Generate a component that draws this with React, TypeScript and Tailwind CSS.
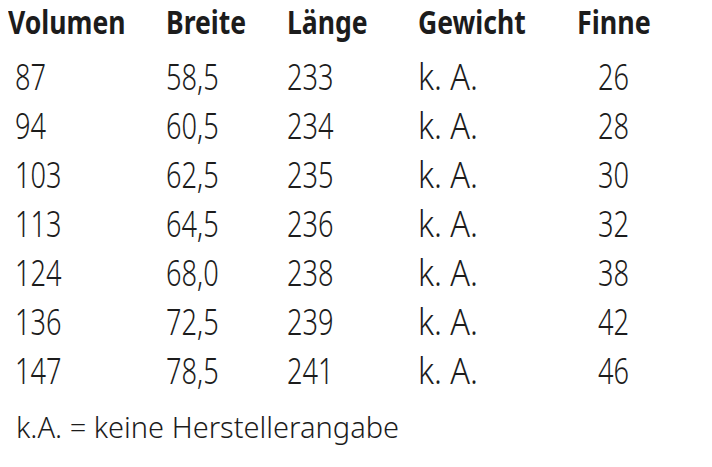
import React from "react";

const rows = [
  ["87", "58,5", "233", "k. A.", "26"],
  ["94", "60,5", "234", "k. A.", "28"],
  ["103", "62,5", "235", "k. A.", "30"],
  ["113", "64,5", "236", "k. A.", "32"],
  ["124", "68,0", "238", "k. A.", "38"],
  ["136", "72,5", "239", "k. A.", "42"],
  ["147", "78,5", "241", "k. A.", "46"],
];

function Num({ children }: { children: React.ReactNode }) {
  return <span className="inline-block origin-left scale-x-[0.755]">{children}</span>;
}

function Head({ children }: { children: React.ReactNode }) {
  return <span className="inline-block origin-left scale-x-[0.83]">{children}</span>;
}

export default function App() {
  return (
    <div className="w-[712px] h-[467px] bg-white text-[#1c1c1c] pl-[8px] font-['Noto_Sans',sans-serif]">
      <div className="grid grid-cols-[158px_121px_131px_157px_78px] h-[44px] leading-[44px] text-[32px] font-bold mb-[8px] whitespace-nowrap">
        <div><Head>Volumen</Head></div>
        <div><Head>Breite</Head></div>
        <div><Head>Länge</Head></div>
        <div><Head>Gewicht</Head></div>
        <div className="flex justify-center"><span className="inline-block origin-center scale-x-[0.84]">Finne</span></div>
      </div>
      {rows.map((r) => (
        <div key={r[0]} className="grid grid-cols-[158px_121px_131px_157px_78px] h-[49px] leading-[49px] text-[36px] font-light whitespace-nowrap">
          <div className="pl-[7px]"><Num>{r[0]}</Num></div>
          <div><Num>{r[1]}</Num></div>
          <div><Num>{r[2]}</Num></div>
          <div><span className="inline-block origin-left scale-x-[0.9]">{r[3]}</span></div>
          <div className="flex justify-center"><span className="inline-block origin-center scale-x-[0.755]">{r[4]}</span></div>
        </div>
      ))}
      <div className="mt-[12px] pl-[8px] h-[40px] leading-[40px] text-[29px] font-light">k.A. = keine Herstellerangabe</div>
    </div>
  );
}
